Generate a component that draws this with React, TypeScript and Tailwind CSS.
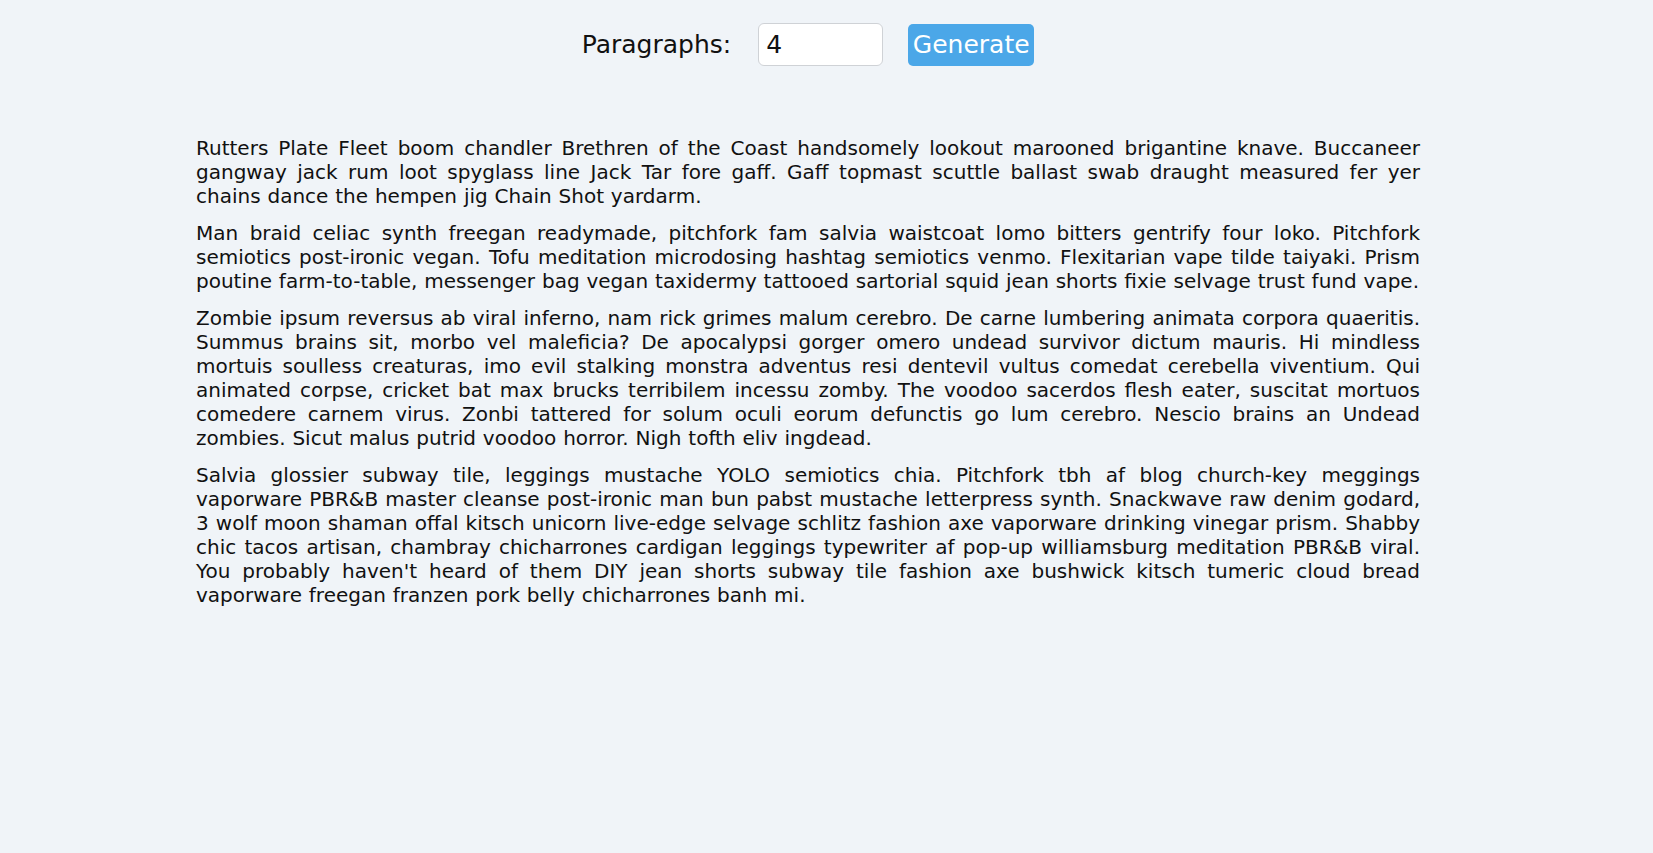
import { useState } from "react";

const PARAGRAPHS = [
  "Rutters Plate Fleet boom chandler Brethren of the Coast handsomely lookout marooned brigantine knave. Buccaneer gangway jack rum loot spyglass line Jack Tar fore gaff. Gaff topmast scuttle ballast swab draught measured fer yer chains dance the hempen jig Chain Shot yardarm.",
  "Man braid celiac synth freegan readymade, pitchfork fam salvia waistcoat lomo bitters gentrify four loko. Pitchfork semiotics post-ironic vegan. Tofu meditation microdosing hashtag semiotics venmo. Flexitarian vape tilde taiyaki. Prism poutine farm-to-table, messenger bag vegan taxidermy tattooed sartorial squid jean shorts fixie selvage trust fund vape.",
  "Zombie ipsum reversus ab viral inferno, nam rick grimes malum cerebro. De carne lumbering animata corpora quaeritis. Summus brains sit, morbo vel maleficia? De apocalypsi gorger omero undead survivor dictum mauris. Hi mindless mortuis soulless creaturas, imo evil stalking monstra adventus resi dentevil vultus comedat cerebella viventium. Qui animated corpse, cricket bat max brucks terribilem incessu zomby. The voodoo sacerdos flesh eater, suscitat mortuos comedere carnem virus. Zonbi tattered for solum oculi eorum defunctis go lum cerebro. Nescio brains an Undead zombies. Sicut malus putrid voodoo horror. Nigh tofth eliv ingdead.",
  "Salvia glossier subway tile, leggings mustache YOLO semiotics chia. Pitchfork tbh af blog church-key meggings vaporware PBR&B master cleanse post-ironic man bun pabst mustache letterpress synth. Snackwave raw denim godard, 3 wolf moon shaman offal kitsch unicorn live-edge selvage schlitz fashion axe vaporware drinking vinegar prism. Shabby chic tacos artisan, chambray chicharrones cardigan leggings typewriter af pop-up williamsburg meditation PBR&B viral. You probably haven't heard of them DIY jean shorts subway tile fashion axe bushwick kitsch tumeric cloud bread vaporware freegan franzen pork belly chicharrones banh mi.",
];

export default function App() {
  const [count, setCount] = useState("4");

  return (
    <div className="min-h-screen w-full bg-[#f0f4f8] font-['DejaVu_Sans',sans-serif] text-[#111]">
      <div className="w-[1616px]">
        <form
          className="flex items-center justify-center pt-[23px]"
          onSubmit={(e) => e.preventDefault()}
        >
          <label htmlFor="count" className="text-[25px] leading-none">
            Paragraphs:
          </label>
          <input
            id="count"
            type="number"
            value={count}
            onChange={(e) => setCount(e.target.value)}
            className="ml-[27px] h-[43px] w-[125px] rounded-[6px] border border-[#cfd2d6] bg-white px-[7px] text-[25px] outline-none [appearance:textfield]"
          />
          <button
            type="submit"
            className="ml-[25px] h-[42px] w-[126px] rounded-[5px] bg-[#4ba7e8] text-[25px] text-white"
          >
            Generate
          </button>
        </form>

        <div className="mx-auto mt-[70px] w-[1224px]">
          {PARAGRAPHS.map((text, i) => (
            <p key={i} className="mb-[13px] text-justify text-[20px] leading-[24px] [word-spacing:0.5px]">
              {text}
            </p>
          ))}
        </div>
      </div>
    </div>
  );
}
